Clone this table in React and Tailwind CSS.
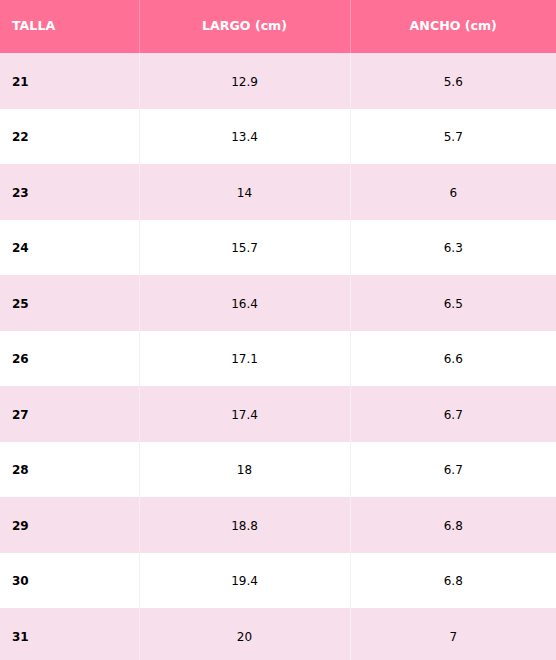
const rows = [
  ['21', '12.9', '5.6'],
  ['22', '13.4', '5.7'],
  ['23', '14', '6'],
  ['24', '15.7', '6.3'],
  ['25', '16.4', '6.5'],
  ['26', '17.1', '6.6'],
  ['27', '17.4', '6.7'],
  ['28', '18', '6.7'],
  ['29', '18.8', '6.8'],
  ['30', '19.4', '6.8'],
  ['31', '20', '7'],
]

export default function App() {
  return (
    <div className="w-[556px] bg-white font-['DejaVu_Sans',Verdana,sans-serif] text-[12px] text-black">
      <table className="w-full table-fixed border-collapse">
        <colgroup>
          <col className="w-[139px]" />
          <col className="w-[211px]" />
          <col className="w-[206px]" />
        </colgroup>
        <thead>
          <tr className="h-[53px] bg-[#ff7096] text-[12.6px] font-bold text-white">
            <th className="border-r border-[#ff9ab5] px-3 pb-px text-left">TALLA</th>
            <th className="border-r border-[#ff9ab5] px-3 pb-px text-center">LARGO (cm)</th>
            <th className="px-3 pb-px text-center">ANCHO (cm)</th>
          </tr>
        </thead>
        <tbody>
          {rows.map((row, i) => (
            <tr key={row[0]} className={`h-[55.5px] ${i % 2 === 0 ? 'bg-[#f8dfec]' : 'bg-white'}`}>
              <td className="border-r border-[#f6eef1] px-3 pt-0.5 text-left font-bold">{row[0]}</td>
              <td className="border-r border-[#f6eef1] px-3 pt-0.5 text-center">{row[1]}</td>
              <td className="px-3 pt-0.5 text-center">{row[2]}</td>
            </tr>
          ))}
        </tbody>
      </table>
    </div>
  )
}
